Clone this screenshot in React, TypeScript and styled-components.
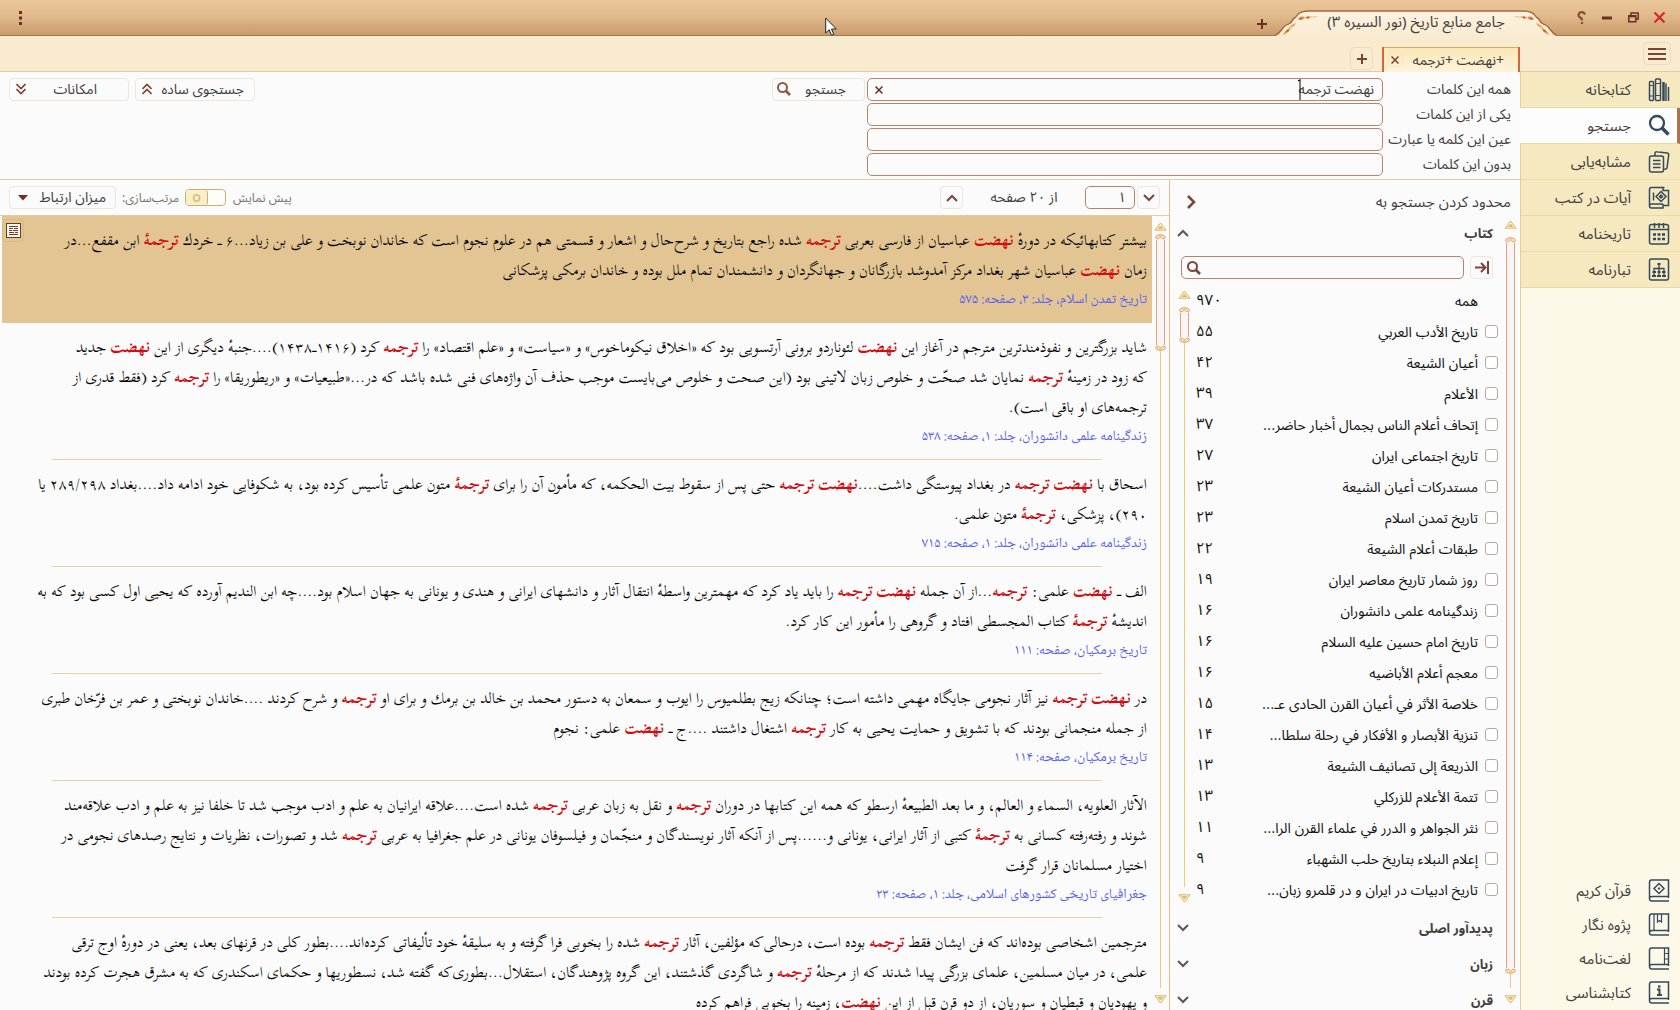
import React from "react";
import styled, { createGlobalStyle } from "styled-components";

const Global = createGlobalStyle`
  * { box-sizing: border-box; }
  body {
    margin: 0;
    background: #fbfbfb;
    color: #43403e;
    font: 14px/22px "Noto Sans", "Noto Sans Arabic", "DejaVu Sans", sans-serif;
  }
  button, input, select { font: inherit; color: inherit; margin: 0; }
`;

const Shell = styled.div`
  direction: rtl;
  height: 100vh;
  display: grid;
  grid-template-rows: 36px 36px minmax(0, 1fr);
  overflow: hidden;
  position: relative;
`;

const wideFace = `"Noto Sans Arabic", "Noto Sans", "DejaVu Sans", sans-serif`;
const naskhFace = `"Noto Naskh Arabic", "Noto Sans Arabic", "Noto Sans", serif`;

/* ---------- title bar ---------- */

const TitleBar = styled.header`
  display: flex;
  align-items: center;
  padding: 0 8px 0 12px;
  background: linear-gradient(#ebc79b, #e3bc8d 40%, #c99c6d);
  border-bottom: 1px solid #a9784a;
`;

const PlainButton = styled.button<{ $w?: number }>`
  width: ${(p) => p.$w ?? 26}px;
  height: 26px;
  padding: 0;
  border: 0;
  background: none;
  display: flex;
  align-items: center;
  justify-content: center;
  cursor: pointer;
`;

const NewBookButton = styled(PlainButton)`
  height: 22px;
  align-self: flex-end;
`;

const WindowButtons = styled.div`
  display: flex;
  width: 115px;
`;

const BookTab = styled.div`
  width: 282px;
  height: 26px;
  margin-top: 10px;
  display: grid;
  > * { grid-area: 1 / 1; }
`;

const BookTitle = styled.h1`
  margin: 0;
  font: 400 15px/24px ${wideFace};
  text-align: center;
  z-index: 1;
`;

const MenuSlot = styled.div`
  margin-right: auto;
`;

/* ---------- tab strip ---------- */

const TabStrip = styled.nav`
  display: flex;
  align-items: flex-end;
  background: #f9ebd0;
  border-bottom: 1px solid #e0cca3;
`;

const HamburgerSlot = styled.div`
  width: 160px;
  align-self: center;
  padding-right: 9px;
`;

const GhostButton = styled.button<{ $w?: number; $line?: string }>`
  width: ${(p) => (p.$w ? `${p.$w}px` : "auto")};
  height: 23px;
  padding: 0;
  border: 1px solid ${(p) => p.$line ?? "#efe5dc"};
  border-radius: 4px;
  background: transparent;
  display: flex;
  align-items: center;
  justify-content: center;
  flex: none;
  cursor: pointer;
`;

const QueryTab = styled.div`
  width: 138px;
  height: 25px;
  display: flex;
  align-items: center;
  justify-content: space-between;
  padding: 0 14px 0 3px;
  margin-bottom: -1px;
  border: solid #d5653a;
  border-width: 0 2px;
  background: linear-gradient(#fbe7b6, #fef3da);
  box-shadow: inset 0 1px #cfae6c;
`;

const TabClose = styled(GhostButton)`
  height: 15px;
`;

const TabAdd = styled.div`
  padding: 0 9px 1px 0;
`;

/* ---------- body ---------- */

const Body = styled.div`
  display: grid;
  grid-template-columns: 160px minmax(0, 1fr);
  min-height: 0;
`;

const Sidebar = styled.aside`
  display: flex;
  flex-direction: column;
  justify-content: space-between;
  background: #fdf9e8;
  border-left: 1px solid #e6ce93;
  font: 15px/24px ${wideFace};
`;

const NavList = styled.ul`
  list-style: none;
  margin: 0;
  padding: 0;
`;

const NavLink = styled.a<{ $active?: boolean }>`
  display: flex;
  align-items: center;
  gap: 17px;
  height: 36px;
  padding-right: ${(p) => (p.$active ? 7 : 10)}px;
  margin-left: ${(p) => (p.$active ? -1 : 0)}px;
  border-right: ${(p) => (p.$active ? "3px solid #b0714a" : "0")};
  border-bottom: 1px solid #ead9a6;
  background: ${(p) => (p.$active ? "#fdfdfd" : "#f6e9bf")};
  color: #43403e;
  text-decoration: none;
`;

const ToolLink = styled(NavLink)`
  height: 34px;
  border-bottom: 0;
  background: transparent;
`;

const Main = styled.main`
  display: grid;
  grid-template-rows: 108px minmax(0, 1fr);
  min-width: 0;
  min-height: 0;
`;

/* ---------- query form ---------- */

const QueryForm = styled.form`
  display: flex;
  align-items: flex-start;
  padding: 6px 9px 0;
  border-bottom: 1px solid #e0cca3;
`;

const Fields = styled.div`
  flex: 0 1 644px;
  display: grid;
  gap: 2px;
`;

const Field = styled.label`
  display: flex;
  align-items: center;
  height: 23px;
  white-space: nowrap;
`;

const FieldName = styled.span`
  width: 128px;
  flex: none;
  padding-bottom: 2px;
`;

const FieldBox = styled.span`
  position: relative;
  flex: 1;
  display: flex;
  align-items: center;
`;

const TextInput = styled.input`
  width: 100%;
  min-width: 0;
  height: 23px;
  padding: 0 8px 1px;
  border: 1px solid #b98368;
  border-radius: 5px;
  background: #fbfbfb;
  line-height: 20px;
  outline: 0;
`;

const Caret = styled.svg`
  position: absolute;
  right: 82px;
  top: 1px;
`;

const ClearSlot = styled.span`
  position: absolute;
  left: 0;
  top: -1px;
`;

const SearchButton = styled(GhostButton)`
  width: 93px;
  margin-right: 2px;
  padding: 0 18px 2px 4px;
  justify-content: space-between;
`;

const WideButton = styled(GhostButton)<{ $pad: number }>`
  width: 120px;
  padding: 0 ${(p) => p.$pad}px 2px 6px;
  justify-content: space-between;
`;

const FormExtras = styled.div`
  margin-right: auto;
  display: flex;
  gap: 6px;
`;

/* ---------- filter panel ---------- */

const Panels = styled.div`
  display: grid;
  grid-template-columns: 351px minmax(0, 1fr);
  min-height: 0;
`;

const FilterPanel = styled.section`
  display: grid;
  grid-template-rows: 36px minmax(0, 1fr);
  border-left: 1px solid #dcbf8a;
  min-height: 0;
`;

const FilterHeader = styled.header`
  display: flex;
  align-items: center;
  justify-content: space-between;
  padding: 8px 9px 0 8px;
  font: 15px/24px ${wideFace};
`;

const FilterBody = styled.div`
  display: grid;
  grid-template-columns: 20px minmax(0, 1fr);
  min-height: 0;
  overflow: hidden;
`;

const Sections = styled.div`
  overflow: hidden;
  min-height: 0;
`;

const SectionHead = styled.h2`
  display: flex;
  align-items: center;
  justify-content: space-between;
  height: 36px;
  margin: 0;
  padding: 0 7px 2px 0;
  font-size: 13px;
  font-weight: 700;
`;

const FilterSearch = styled.div`
  display: flex;
  gap: 6px;
  padding: 4px 7px 6px 11px;
`;

const InnerIcon = styled.span`
  position: absolute;
  left: 6px;
  top: 5px;
  line-height: 0;
`;

const BookList = styled.div`
  display: grid;
  grid-template-columns: minmax(0, 1fr) 19px;
  padding-left: 5px;
  margin-bottom: 6px;
  font-family: Inter, "Noto Sans Arabic", sans-serif;
`;

const BookRow = styled.label`
  display: flex;
  align-items: center;
  height: 31px;
  padding: 0 2px;
  color: #11100f;
`;

const CheckSlot = styled.span`
  width: 20px;
  display: flex;
`;

const CheckBox = styled.input`
  appearance: none;
  width: 13px;
  height: 13px;
  border: 1px solid #b3a9a4;
  border-radius: 3px;
  background: #fff;
`;

const BookName = styled.span`
  flex: 1;
  white-space: nowrap;
`;

const Count = styled.span`
  text-align: left;
  margin-bottom: 2px;
  font: 15px/22px ${wideFace};
`;

/* ---------- scroll bar ---------- */

const Bar = styled.div<{ $top: number; $bottom: number }>`
  display: flex;
  flex-direction: column;
  align-items: center;
  padding: ${(p) => p.$top}px 0 ${(p) => p.$bottom}px;
  min-height: 0;
`;

const Thumb = styled.div<{ $size: number; $gap: number }>`
  flex: ${(p) => (p.$size ? `0 0 ${p.$size}px` : "1 1 0")};
  margin-top: ${(p) => p.$gap}px;
  display: flex;
  flex-direction: column;
  align-items: center;
`;

const ThumbBody = styled.div`
  flex: 1;
  width: 9px;
  border: solid #e0a184;
  border-width: 0 1px;
  background: #faf4f4;
`;

const Rail = styled.div<{ $size?: number }>`
  flex: ${(p) => (p.$size ? `0 0 ${p.$size}px` : "1 1 0")};
  width: 1px;
  margin-bottom: 7px;
  background: #ecca7f;
`;

/* ---------- results ---------- */

const Results = styled.section`
  display: grid;
  grid-template-rows: 36px minmax(0, 1fr);
  min-width: 0;
  min-height: 0;
`;

const ResultsBar = styled.header`
  display: flex;
  align-items: center;
  padding: 0 9px;
  border-bottom: 1px solid #e0cca3;
`;

const PageInput = styled(TextInput)`
  width: 50px;
  margin-right: 2px;
  text-align: right;
`;

const PageTotal = styled.span`
  width: 122px;
  padding-bottom: 2px;
  text-align: center;
`;

const ViewTools = styled.div`
  margin-right: auto;
  display: flex;
  align-items: center;
  gap: 6px;
`;

const ToolLabel = styled.label`
  display: flex;
  align-items: center;
  gap: 7px;
  font-size: 12px;
  color: #77716d;
`;

const Toggle = styled.input`
  appearance: none;
  width: 41px;
  height: 17px;
  border: 1px solid #cdb069;
  border-radius: 4px;
  background: #fffdf8;
  display: flex;
  justify-content: flex-end;
  &::before {
    content: "O";
    width: 21px;
    border-radius: 3px;
    border-right: 1px solid #cdb069;
    background: #fbeecb;
    color: #d9c17c;
    font: 700 11px/15px "Noto Sans", sans-serif;
    text-align: center;
  }
`;

const SelectBox = styled.span`
  position: relative;
  width: 107px;
`;

const SortSelect = styled.select`
  display: block;
  appearance: none;
  width: 100%;
  height: 23px;
  padding: 0 9px 1px 20px;
  border: 1px solid #efe5dc;
  border-radius: 4px;
  background: transparent;
  line-height: 20px;
`;

const SelectArrow = styled.svg`
  position: absolute;
  left: 9px;
  top: 9px;
  pointer-events: none;
`;

const ResultsBody = styled.div`
  display: grid;
  grid-template-columns: 17px minmax(0, 1fr);
  padding-left: 2px;
  min-height: 0;
`;

const ResultList = styled.div`
  overflow: hidden;
  min-height: 0;
`;

const Result = styled.article<{ $selected?: boolean }>`
  position: relative;
  padding: ${(p) => (p.$selected ? "9px 5px 10px" : "9px 5px 0")};
  background: ${(p) => (p.$selected ? "#e2c592" : "transparent")};
`;

const Excerpt = styled.p`
  margin: 0 0 2px;
  color: #060505;
  font: 15px/30px "Scheherazade New", ${naskhFace};
`;

const Hit = styled.mark`
  background: none;
  color: #d30d12;
  font-weight: 700;
`;

const Dash = styled.span`
  font-family: ${wideFace};
`;

const Source = styled.a`
  display: block;
  color: #5560f2;
  font: 14px/26px ${naskhFace};
  text-decoration: none;
`;

const Divider = styled.hr`
  margin: 9px 45px 0;
  height: 1px;
  border: 0;
  background: #ead3a3;
`;

const NoteSlot = styled.span`
  position: absolute;
  left: 0;
  top: 3px;
`;

const Pointer = styled.svg`
  position: absolute;
  left: 825px;
  top: 17px;
  z-index: 5;
  pointer-events: none;
`;

/* ---------- drawings ---------- */

const brown = "#7a4535";
const navy = "#34495c";

const Svg = ({ w, h, children, c = brown, s = 2, box }: { w: number; h: number; children: React.ReactNode; c?: string; s?: number; box?: string }) => (
  <svg width={w} height={h} viewBox={box ?? `0 0 ${w} ${h}`} fill="none" stroke={c} strokeWidth={s} aria-hidden="true">
    {children}
  </svg>
);

const Cross = ({ size = 9, c = "#6b2f22", s = 1.5 }) => (
  <Svg w={size} h={size} c={c} s={s}>
    <path d={`M.5 .5L${size - 0.5} ${size - 0.5}M${size - 0.5} .5L.5 ${size - 0.5}`} />
  </Svg>
);

const Plus = ({ c = brown }: { c?: string }) => (
  <Svg w={10} h={10} c={c}>
    <path d="M0 5h10M5 0v10" />
  </Svg>
);

const Lens = ({ size = 14, c = brown, s = 2 }) => (
  <Svg w={size} h={size} box="0 0 14 14" c={c} s={s}>
    <circle cx="5.5" cy="5.5" r="4.5" />
    <path d="M9 9l4 4" strokeWidth={s + 0.6} />
  </Svg>
);

const Chevron = ({ up, c = "#5f5552" }: { up?: boolean; c?: string }) => (
  <Svg w={12} h={8} c={c} s={2}>
    <path d={up ? "M1 7l5-5 5 5" : "M1 1l5 5 5-5"} />
  </Svg>
);

const DoubleChevron = ({ up }: { up?: boolean }) => (
  <Svg w={10} h={12} s={1.6}>
    <path d={up ? "M.5 6L5 1.500 9.500 6M.5 11L5 6.500 9.500 11" : "M.5 1L5 5.500 9.500 1M.5 6L5 10.500 9.500 6"} />
  </Svg>
);

const ArrowMark = ({ down }: { down?: boolean }) => (
  <svg width="13" height="9" viewBox="0 0 13 9" fill="#fdf3d4" stroke="#dcb35f" aria-hidden="true">
    {down ? <path d="M1 .8h11L6.500 8z" /> : <path d="M1 8.200h11L6.500 1z" />}
    {down ? <path d="M4.500 2.500h4L6.500 5z" fill="#f2cf78" /> : <path d="M4.500 6.500h4L6.500 4z" fill="#f2cf78" />}
  </svg>
);

const Cap = ({ down }: { down?: boolean }) => (
  <svg width="11" height="6" viewBox="0 0 11 6" fill="#fbe0c8" stroke="#e0926c" aria-hidden="true">
    <g transform={down ? "rotate(180 5.500 3)" : undefined}>
      <path d="M.5 3.500C1 1.500 3 .8 5.500 .8S10 1.500 10.500 3.500C10 5 8.500 5.200 7.500 4.500L5.500 3 3.500 4.500C2.500 5.200 1 5 .5 3.500Z" />
      <path d="M4.500 3.500L5.500 1.500l1 2z" fill="#f6cf45" stroke="#f6cf45" />
    </g>
  </svg>
);

function ScrollBar({ top, bottom, thumb = 0, rail, gap = 8 }: { top: number; bottom: number; thumb?: number; rail?: number; gap?: number }) {
  return (
    <Bar $top={top} $bottom={bottom} aria-hidden="true">
      <ArrowMark />
      <Thumb $size={thumb} $gap={gap}>
        <Cap />
        <ThumbBody />
        <Cap down />
      </Thumb>
      <Rail $size={rail} />
      <ArrowMark down />
    </Bar>
  );
}

const TabShape = () => (
  <svg width="282" height="26" viewBox="0 0 282 26" aria-hidden="true">
    <defs>
      <linearGradient id="paper" x1="0" y1="0" x2="0" y2="1">
        <stop offset="0" stopColor="#fdf3e2" />
        <stop offset="1" stopColor="#f9ebd0" />
      </linearGradient>
    </defs>
    <path
      d="M0 26C6 23 7 18 10 16C13 13.500 16 14.500 17 11C18.500 7 20 9 22 5.500C24 2 27 1 34 1H248C255 1 258 2 260 5.500C262 9 263.500 7 265 11C266 14.500 269 13.500 272 16C275 18 276 23 282 26Z"
      fill="url(#paper)"
    />
    <path
      d="M0 25.500C6 23 7 18 10 16C13 13.500 16 14.500 17 11C18.500 7 20 9 22 5.500C24 2 27 1 34 1H248C255 1 258 2 260 5.500C262 9 263.500 7 265 11C266 14.500 269 13.500 272 16C275 18 276 23 282 25.500"
      fill="none"
      stroke="#a8683f"
      strokeWidth="1.500"
    />
    {[0, 1].map((side) => (
      <g key={side} transform={side ? "matrix(-1 0 0 1 282 0)" : undefined}>
        <path d="M8 25C10 21 12 19 16 17.500C15 21 12 23 8 25Z" fill="#e98a45" />
        <path d="M14 18C15 15 18 14 21 13C20 16 18 17.500 14 18Z" fill="#f0a868" />
        <circle cx="12.500" cy="21" r="1.200" fill="#7c8a35" />
        <path d="M23 9.500C24 6.500 27 6 29.500 7C29 9.500 26 11 23 9.500Z" fill="#e98a45" />
        <path d="M29 8C32 5.500 35 6.500 37 6.500C35 8.500 32 9.500 29 8Z" fill="#f0a868" />
        <path d="M36 7.500C39 5.500 41 6 43 6C41 7.500 39 8 36 7.500Z" fill="#f6c795" />
        <circle cx="26" cy="8.500" r="1" fill="#7c8a35" />
        <circle cx="33" cy="7.500" r="1" fill="#c2452a" />
      </g>
    ))}
  </svg>
);

const book = <path d="M20.500 19V1H3.500Q1.500 1 1.500 3.500V19.500M20.500 17.500H4Q1.500 17.500 1.500 19.700T4 22H21" />;

const icons: Record<string, React.ReactNode> = {
  library: (
    <>
      <rect x="1.500" y="3.500" width="4" height="19" rx="1" />
      <rect x="7.500" y="1" width="5" height="21.500" rx="1" />
      <path d="M1.500 7.500h4M1.500 18h4M7.500 5.500h5M7.500 17.500h5" strokeWidth="1" />
      <path d="M15.500 4v19" strokeWidth="2.500" />
      <path d="M18 5.500V23M20.500 9v14" />
    </>
  ),
  search: (
    <>
      <circle cx="9" cy="9" r="7" strokeWidth="2.300" />
      <path d="M14 14l6.500 6.500" strokeWidth="3.500" />
    </>
  ),
  similar: (
    <>
      <rect x="1.500" y="6" width="14" height="16" rx="2" />
      <path d="M5 10.500h7.500M5 14h7.500M5 17.500h7.500M7 6V3.500Q7 1.500 9 1.800L19 3Q21 3.300 20.700 5.200L19 18Q18.800 19.500 15.500 19" />
    </>
  ),
  verses: (
    <>
      <path d="M16.500 1.500H3.500Q1.500 1.500 1.500 3.500V20.500M15 18H3.500Q1.500 18 1.500 20T3.500 22H15V18" />
      <path d="M15 1.500v3h5.500V19.500h-5M5.500 6.500v8M13 5.500l5 5-5 5-5-5z" />
      <path d="M13 9l1.500 1.500L13 12l-1.500-1.500z" />
    </>
  ),
  calendar: (
    <>
      <rect x="1.500" y="2.500" width="19" height="19.500" rx="2" />
      <path d="M1.500 7.500h19M6.500 1v5M11 1v5M15.500 1v5" />
      <path d="M5 12.500h3M9.500 12.500h3M14 12.500h3M5 17h3M9.500 17h3M14 17h3" strokeWidth="2.600" />
    </>
  ),
  tree: (
    <>
      <rect x="1.500" y="1" width="19" height="21" rx="2" />
      <path d="M11 5v13M6 13.500v-3h10v3M6 17.500v-3.500M16 17.500v-3.500" strokeWidth="1.300" />
      <path d="M9.500 6h3M4.500 14h3.500M14 14h3.500M9.500 14h3M4 18h4M9 18h4M14 18h4" strokeWidth="2" />
    </>
  ),
  quran: (
    <>
      {book}
      <path d="M11 4.500l5 5-5 5-5-5z" />
      <path d="M11 8.300v2.400M9.800 9.500h2.400" strokeWidth="1.200" />
    </>
  ),
  notebook: (
    <>
      {book}
      <path d="M6 1v16.500M9.500 1v8l2-1.500 2 1.500V1" strokeWidth="1.200" />
    </>
  ),
  dictionary: (
    <>
      {book}
      <path d="M16.500 1v16.500M16.500 6.500h4M16.500 12h4" strokeWidth="1.200" />
    </>
  ),
  info: (
    <>
      {book}
      <path d="M9 8.500h2.500V14M9 14h5" strokeWidth="2" />
      <path d="M10 5.500h2.500" strokeWidth="2.200" />
    </>
  ),
};

const NavIcon = ({ name }: { name: string }) => (
  <Svg w={22} h={24} c={navy} s={1.5}>
    {icons[name]}
  </Svg>
);

/* ---------- data ---------- */

const nav = [
  ["library", "کتابخانه"],
  ["search", "جستجو"],
  ["similar", "مشابه‌یابی"],
  ["verses", "آیات در کتب"],
  ["calendar", "تاریخنامه"],
  ["tree", "تبارنامه"],
];

const tools = [
  ["quran", "قرآن کریم"],
  ["notebook", "پژوه نگار"],
  ["dictionary", "لغت‌نامه"],
  ["info", "کتابشناسی"],
];

const books: [string, string][] = [
  ["تاریخ الأدب العربي", "۵۵"],
  ["أعیان الشیعة", "۴۲"],
  ["الأعلام", "۳۹"],
  ["إتحاف أعلام الناس بجمال أخبار حاضر...", "۳۷"],
  ["تاریخ اجتماعی ایران", "۲۷"],
  ["مستدرکات أعیان الشیعة", "۲۳"],
  ["تاریخ تمدن اسلام", "۲۳"],
  ["طبقات أعلام الشیعة", "۲۲"],
  ["روز شمار تاریخ معاصر ایران", "۱۹"],
  ["زندگینامه علمی دانشوران", "۱۶"],
  ["تاریخ امام حسین علیه السلام", "۱۶"],
  ["معجم أعلام الأباضیه", "۱۶"],
  ["خلاصة الأثر في أعیان القرن الحادی عـ...", "۱۵"],
  ["تنزیة الأبصار و الأفکار في رحلة سلطا...", "۱۴"],
  ["الذریعة إلی تصانیف الشیعة", "۱۳"],
  ["تتمة الأعلام للزرکلي", "۱۳"],
  ["نثر الجواهر و الدرر في علماء القرن الرا...", "۱۱"],
  ["إعلام النبلاء بتاریخ حلب الشهباء", "۹"],
  ["تاریخ ادبیات در ایران و در قلمرو زبان...", "۹"],
];

/* Words between asterisks are search hits. */
const results: { lines: string[]; source: string }[] = [
  {
    lines: [
      "بیشتر کتابهائیکه در دورهٔ *نهضت* عباسیان از فارسی بعربی *ترجمه* شده راجع بتاریخ و شرح‌حال و اشعار و قسمتی هم در علوم نجوم است که خاندان نوبخت و علی بن زیاد...۶ ـ خردك *ترجمهٔ* ابن مقفع...در",
      "زمان *نهضت* عباسیان شهر بغداد مرکز آمدوشد بازرگانان و جهانگردان و دانشمندان تمام ملل بوده و خاندان برمکی پزشکانی",
    ],
    source: "تاریخ تمدن اسلام، جلد: ۳، صفحه: ۵۷۵",
  },
  {
    lines: [
      "شاید بزرگترین و نفوذمندترین مترجم در آغاز این *نهضت* لئوناردو برونی آرتسویی بود که «اخلاق نیکوماخوس» و «سیاست» و «علم اقتصاد» را *ترجمه* کرد (۱۴۱۶ـ۱۴۳۸)....جنبهٔ دیگری از این *نهضت* جدید",
      "که زود در زمینهٔ *ترجمه* نمایان شد صحّت و خلوص زبان لاتینی بود (این صحت و خلوص می‌بایست موجب حذف آن واژه‌های فنی شده باشد که در...«طبیعیات» و «ریطوریقا» را *ترجمه* کرد (فقط قدری از",
      "ترجمه‌های او باقی است).",
    ],
    source: "زندگینامه علمی دانشوران، جلد: ۱، صفحه: ۵۳۸",
  },
  {
    lines: [
      "اسحاق با *نهضت ترجمه* در بغداد پیوستگی داشت....*نهضت ترجمه* حتی پس از سقوط بیت الحکمه، که مأمون آن را برای *ترجمهٔ* متون علمی تأسیس کرده بود، به شکوفایی خود ادامه داد....بغداد ۲۸۹/۲۹۸ یا",
      "۲۹۰)، پزشکی، *ترجمهٔ* متون علمی.",
    ],
    source: "زندگینامه علمی دانشوران، جلد: ۱، صفحه: ۷۱۵",
  },
  {
    lines: [
      "الف ـ *نهضت* علمی: *ترجمه*...از آن جمله *نهضت ترجمه* را باید یاد کرد که مهمترین واسطهٔ انتقال آثار و دانشهای ایرانی و هندی و یونانی به جهان اسلام بود....چه ابن الندیم آورده که یحیی اول کسی بود که به",
      "اندیشهٔ *ترجمهٔ* کتاب المجسطی افتاد و گروهی را مأمور این کار کرد.",
    ],
    source: "تاریخ برمکیان، صفحه: ۱۱۱",
  },
  {
    lines: [
      "در *نهضت ترجمه* نیز آثار نجومی جایگاه مهمی داشته است؛ چنانکه زیج بطلمیوس را ایوب و سمعان به دستور محمد بن خالد بن برمك و برای او *ترجمه* و شرح کردند ....خاندان نوبختی و عمر بن فرّخان طبری",
      "از جمله منجمانی بودند که با تشویق و حمایت یحیی به کار *ترجمه* اشتغال داشتند ....ج ـ *نهضت* علمی: نجوم",
    ],
    source: "تاریخ برمکیان، صفحه: ۱۱۴",
  },
  {
    lines: [
      "الآثار العلویه، السماء و العالم، و ما بعد الطبیعهٔ ارسطو که همه این کتابها در دوران *ترجمه* و نقل به زبان عربی *ترجمه* شده است....علاقه ایرانیان به علم و ادب موجب شد تا خلفا نیز به علم و ادب علاقه‌مند",
      "شوند و رفته‌رفته کسانی به *ترجمهٔ* کتبی از آثار ایرانی، یونانی و......پس از آنکه آثار نویسندگان و منجّمان و فیلسوفان یونانی در علم جغرافیا به عربی *ترجمه* شد و تصورات، نظریات و نتایج رصدهای نجومی در",
      "اختیار مسلمانان قرار گرفت",
    ],
    source: "جغرافیای تاریخی کشورهای اسلامی، جلد: ۱، صفحه: ۲۳",
  },
  {
    lines: [
      "مترجمین اشخاصی بوده‌اند که فن ایشان فقط *ترجمه* بوده است، درحالی‌که مؤلفین، آثار *ترجمه* شده را بخوبی فرا گرفته و به سلیقهٔ خود تألیفاتی کرده‌اند....بطور کلی در قرنهای بعد، یعنی در دورهٔ اوج ترقی",
      "علمی، در میان مسلمین، علمای بزرگی پیدا شدند که از مرحلهٔ *ترجمه* و شاگردی گذشتند، این گروه پژوهندگان، استقلال...بطوری‌که گفته شد، نسطوریها و حکمای اسکندری که به مشرق هجرت کرده بودند",
      "و یهودیان و قبطیان و سوریان، از دو قرن قبل از این *نهضت*، زمینه را بخوبی فراهم کرده",
    ],
    source: "",
  },
];

const withDashes = (text: string) =>
  text.split(/(ـ)/).map((piece, i) => (piece === "ـ" ? <Dash key={i}>{piece}</Dash> : piece));

function Marked({ text }: { text: string }) {
  return <>{text.split("*").map((part, i) => (i % 2 ? <Hit key={i}>{part}</Hit> : <React.Fragment key={i}>{withDashes(part)}</React.Fragment>))}</>;
}

/* ---------- page ---------- */

export default function App() {
  return (
    <Shell lang="fa">
      <Global />
      <TitleBar>
        <WindowButtons>
          <PlainButton aria-label="بستن"><Cross size={11} c="#d8232f" s={2} /></PlainButton>
          <PlainButton aria-label="بازگردانی">
            <Svg w={11} h={11} s={1.5} c="#6b2f22"><path d="M3 3V1h7.200v6H8M.8 3.800h7v6h-7zM.8 4.500h7" /></Svg>
          </PlainButton>
          <PlainButton aria-label="کوچک کردن"><Svg w={10} h={4} s={3} c="#6b2f22"><path d="M0 2h10" /></Svg></PlainButton>
          <PlainButton aria-label="راهنما">
            <Svg w={9} h={13} s={2.2} c="#8a4d36"><path d="M8 3.500Q7 1 4.500 1.200T1.500 4Q1.500 5.500 3.300 6.500T5 9.500M5 11v2" /></Svg>
          </PlainButton>
        </WindowButtons>
        <BookTab>
          <TabShape />
          <BookTitle>جامع منابع تاریخ (نور السیره ۳)</BookTitle>
        </BookTab>
        <NewBookButton aria-label="افزودن"><Plus c="#6b2f22" /></NewBookButton>
        <MenuSlot>
          <PlainButton $w={16} aria-label="گزینه‌ها">
            <Svg w={3} h={14} s={3} c="#6b2f22"><path d="M1.500 0v3M1.500 5.500v3M1.500 11v3" /></Svg>
          </PlainButton>
        </MenuSlot>
      </TitleBar>

      <TabStrip>
        <HamburgerSlot>
          <GhostButton $w={28} $line="#eddcbc" aria-label="فهرست"><Svg w={18} h={12}><path d="M0 1h18M0 6h18M0 11h18" /></Svg></GhostButton>
        </HamburgerSlot>
        <QueryTab>
          <span>+نهضت +ترجمه</span>
          <TabClose $w={16} $line="#f5e5c3" aria-label="بستن زبانه"><Cross size={8} c={brown} /></TabClose>
        </QueryTab>
        <TabAdd>
          <GhostButton $w={23} $line="#eddcbc" aria-label="زبانهٔ تازه"><Plus /></GhostButton>
        </TabAdd>
      </TabStrip>

      <Body>
        <Sidebar>
          <NavList>
            {nav.map(([icon, name]) => (
              <li key={icon}>
                <NavLink href="#" $active={icon === "search"}><NavIcon name={icon} />{name}</NavLink>
              </li>
            ))}
          </NavList>
          <NavList>
            {tools.map(([icon, name]) => (
              <li key={icon}>
                <ToolLink href="#"><NavIcon name={icon} />{name}</ToolLink>
              </li>
            ))}
          </NavList>
        </Sidebar>

        <Main>
          <QueryForm>
            <Fields>
              <Field>
                <FieldName>همه این کلمات</FieldName>
                <FieldBox>
                  <TextInput defaultValue="نهضت ترجمه" />
                  <Caret width="4" height="21" aria-hidden="true"><path d="M3 0v21" stroke="#000" /><path d="M1 1.500h2" stroke="#000" /></Caret>
                  <ClearSlot><PlainButton type="button" $w={24} aria-label="پاک کردن"><Cross size={8} /></PlainButton></ClearSlot>
                </FieldBox>
              </Field>
              {["یکی از این کلمات", "عین این کلمه یا عبارت", "بدون این کلمات"].map((name) => (
                <Field key={name}>
                  <FieldName>{name}</FieldName>
                  <FieldBox><TextInput /></FieldBox>
                </Field>
              ))}
            </Fields>
            <SearchButton type="button">جستجو<Lens c="#8a5a4b" /></SearchButton>
            <FormExtras>
              <WideButton type="button" $pad={10}>جستجوی ساده<DoubleChevron up /></WideButton>
              <WideButton type="button" $pad={31}>امکانات<DoubleChevron /></WideButton>
            </FormExtras>
          </QueryForm>

          <Panels>
            <FilterPanel>
              <FilterHeader>
                محدود کردن جستجو به
                <PlainButton $w={26} aria-label="جمع کردن"><Svg w={9} h={14} s={2.5}><path d="M1 1l6 6-6 6" /></Svg></PlainButton>
              </FilterHeader>
              <FilterBody>
                <ScrollBar top={4} bottom={6} rail={14} />
                <Sections>
                  <SectionHead>کتاب<PlainButton $w={25} aria-label="بستن بخش"><Chevron up /></PlainButton></SectionHead>
                  <FilterSearch>
                    <GhostButton $w={23} aria-label="رفتن به کتاب"><Svg w={14} h={13}><path d="M0 6.500h10M6 2l4.500 4.500L6 11M13 0v13" /></Svg></GhostButton>
                    <FieldBox>
                      <TextInput aria-label="جستجو در کتاب‌ها" />
                      <InnerIcon><Lens /></InnerIcon>
                    </FieldBox>
                  </FilterSearch>
                  <BookList>
                    <div>
                      <BookRow as="div"><CheckSlot /><BookName>همه</BookName><Count>۹۷۰</Count></BookRow>
                      {books.map(([name, count]) => (
                        <BookRow key={name}>
                          <CheckSlot><CheckBox type="checkbox" /></CheckSlot>
                          <BookName>{name}</BookName>
                          <Count>{count}</Count>
                        </BookRow>
                      ))}
                    </div>
                    <ScrollBar top={5} bottom={2} thumb={36} />
                  </BookList>
                  {["پدیدآور اصلی", "زبان", "قرن"].map((name) => (
                    <SectionHead key={name}>{name}<PlainButton $w={25} aria-label={name}><Chevron /></PlainButton></SectionHead>
                  ))}
                </Sections>
              </FilterBody>
            </FilterPanel>

            <Results>
              <ResultsBar>
                <GhostButton $w={23} aria-label="صفحهٔ بعد"><Chevron c={brown} /></GhostButton>
                <PageInput defaultValue="۱" aria-label="شمارهٔ صفحه" />
                <PageTotal>از ۲۰ صفحه</PageTotal>
                <GhostButton $w={23} aria-label="صفحهٔ قبل"><Chevron up c={brown} /></GhostButton>
                <ViewTools>
                  <ToolLabel>پیش نمایش<Toggle type="checkbox" role="switch" /></ToolLabel>
                  <ToolLabel htmlFor="sort">مرتب‌سازی:</ToolLabel>
                  <SelectBox>
                    <SortSelect id="sort"><option>میزان ارتباط</option></SortSelect>
                    <SelectArrow width="10" height="6" aria-hidden="true"><path d="M0 0h10L5 5.500z" fill="#6b2f22" /></SelectArrow>
                  </SelectBox>
                </ViewTools>
              </ResultsBar>
              <ResultsBody>
                <ScrollBar top={6} bottom={6} thumb={117} gap={3} />
                <ResultList>
                  {results.map((r, i) => (
                    <Result key={i} $selected={i === 0}>
                      <Excerpt>
                        {r.lines.map((line, n) => (
                          <React.Fragment key={n}>{n > 0 && <br />}<Marked text={line} /></React.Fragment>
                        ))}
                      </Excerpt>
                      {r.source && <Source href="#">{r.source}</Source>}
                      {i === 0 ? (
                        <NoteSlot>
                          <GhostButton $w={22} $line="#d9ba85" aria-label="یادداشت">
                            <svg width="15" height="15" viewBox="0 0 15 15" fill="#fff8ee" stroke="#6b3a2a" aria-hidden="true">
                              <rect x=".5" y=".5" width="14" height="14" />
                              <path d="M3 3.500h9M3 5.500h4M8 5.500h4M3 7.500h3M7 7.500h5M3 9.500h5M9 9.500h3M3 11.500h9" />
                            </svg>
                          </GhostButton>
                        </NoteSlot>
                      ) : (
                        r.source && <Divider />
                      )}
                    </Result>
                  ))}
                </ResultList>
              </ResultsBody>
            </Results>
          </Panels>
        </Main>
      </Body>

      <Pointer width="12" height="20" viewBox="0 0 12 20" aria-hidden="true">
        <path d="M.7 1v15l3.500-3.300 2.300 5.600 2.300-1-2.300-5.300h4.800z" fill="#fff" stroke="#222" />
      </Pointer>
    </Shell>
  );
}
